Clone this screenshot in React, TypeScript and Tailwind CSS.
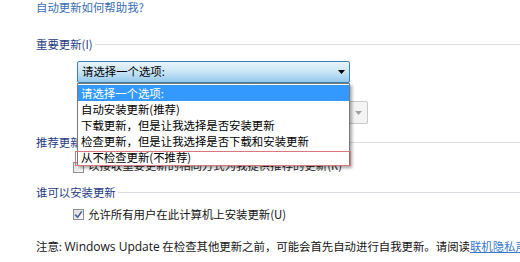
import React from "react";

const FONT = { fontFamily: '"Noto Sans CJK SC", "Noto Sans", sans-serif' };

function Heading({ text }: { text: string }) {
  return (
    <div className="flex items-center h-[14px] leading-[14px] text-[#1f3c84]">
      <span className="whitespace-nowrap">{text}</span>
      <div className="flex-1 h-px bg-[#d9dde2] ml-[2px]" />
    </div>
  );
}

function Arrow({ color = "#000" }: { color?: string }) {
  return (
    <svg width="7" height="4" viewBox="0 0 7 4">
      <path d="M0 0 L7 0 L3.5 4 Z" fill={color} />
    </svg>
  );
}

function Checkbox({ checked }: { checked?: boolean }) {
  return (
    <div className="shrink-0 w-[11px] h-[11px] border border-[#8e8f8f] bg-gradient-to-br from-[#dcdcdc] to-[#fbfbfb] flex items-center justify-center">
      {checked && (
        <svg width="9" height="9" viewBox="0 0 9 9">
          <path d="M1.2 4.6 L3.6 7.2 L7.8 1.4" stroke="#4a5f97" strokeWidth="1.6" fill="none" />
        </svg>
      )}
    </div>
  );
}

export default function App() {
  const items = [
    "自动安装更新(推荐)",
    "下载更新，但是让我选择是否安装更新",
    "检查更新，但是让我选择是否下载和安装更新",
  ];
  return (
    <div
      className="w-[520px] h-[262px] bg-white overflow-hidden text-[11.4px] text-[#141414] pl-[36px]"
      style={FONT}
    >
      <div className="h-[14px] leading-[14px] text-[#3a6db3] whitespace-nowrap">自动更新如何帮助我?</div>

      <div className="mt-[23px]">
        <Heading text="重要更新(I)" />
      </div>

      <div className="relative mt-[10px] ml-[41px] w-[273px] z-10">
        <div className="h-[22px] border border-[#3c7fb1] rounded-[2px] bg-gradient-to-b from-[#eaf5fc] via-[#c8e4f6] to-[#95c9ec] flex items-center pl-[4px] pr-[4px]">
          <span className="flex-1 whitespace-nowrap text-black">请选择一个选项:</span>
          <Arrow />
        </div>
        <div className="absolute left-0 top-full w-[273px] bg-white border border-[#7a7a7a] shadow-[2px_2px_3px_rgba(0,0,0,0.35)] pt-px">
          <div className="h-[16px] leading-[16px] bg-[#3399ff] text-white pl-[3px] whitespace-nowrap">请选择一个选项:</div>
          {items.map((t) => (
            <div key={t} className="h-[16px] leading-[16px] text-black pl-[3px] whitespace-nowrap">
              {t}
            </div>
          ))}
          <div className="h-[16px] leading-[16px] text-black pl-[3px] whitespace-nowrap">从不检查更新(不推荐)</div>
          <div className="absolute left-[-3px] right-[-2px] bottom-[-1px] h-[15px] border border-[#d8787e]" />
        </div>
      </div>

      <div className="mt-[18px] ml-[41px] w-[291px] h-[23px] border border-[#c9c9c9] rounded-[2px] bg-[#f4f4f4] flex items-center justify-end pr-[5px]">
        <Arrow color="#a0a0a0" />
      </div>

      <div className="mt-[11px]">
        <Heading text="推荐更新" />
      </div>

      <div className="mt-[13px] ml-[37px] flex items-start gap-[4px] h-[11px]">
        <Checkbox />
        <span className="whitespace-nowrap text-[#222] leading-[11px] mt-[-2px]">以接收重要更新的相同方式为我提供推荐的更新(R)</span>
      </div>

      <div className="mt-[12px]">
        <Heading text="谁可以安装更新" />
      </div>

      <div className="mt-[9px] ml-[37px] flex items-center gap-[4px] h-[13px]">
        <Checkbox checked />
        <span className="whitespace-nowrap">允许所有用户在此计算机上安装更新(U)</span>
      </div>

      <div className="mt-[18px] h-[14px] leading-[14px] whitespace-nowrap">
        注意:{" "}
        <span className="text-[12px]" style={{ fontFamily: '"Open Sans", sans-serif' }}>
          Windows Update
        </span>{" "}
        在检查其他更新之前，可能会首先自动进行自我更新。请阅读
        <span className="text-[#3a78c9] underline">联机隐私声明</span>
      </div>
    </div>
  );
}
